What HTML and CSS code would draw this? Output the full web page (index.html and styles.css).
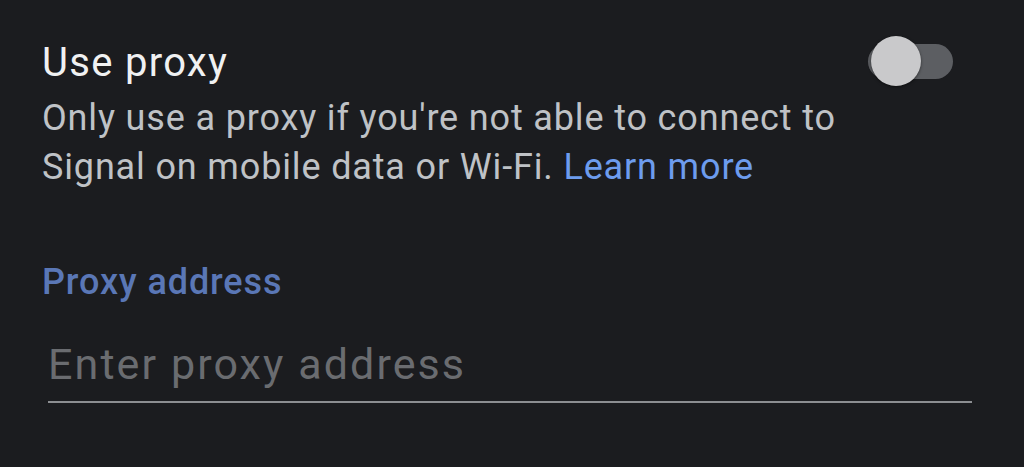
FILE: index.html
```html
<!DOCTYPE html>
<html lang="en">
<head>
<meta charset="utf-8">
<title>Proxy settings</title>
<link rel="stylesheet" href="styles.css">
</head>
<body>
<div class="screen">
  <div class="pref-row">
    <div class="pref-text">
      <div class="pref-title">Use proxy</div>
      <div class="pref-summary">Only use a proxy if you're not able to connect to Signal on mobile data or Wi-Fi. <span class="link">Learn more</span></div>
    </div>
    <div class="switch">
      <div class="switch-track"></div>
      <div class="switch-thumb"></div>
    </div>
  </div>
  <div class="field-label">Proxy address</div>
  <div class="field">
    <div class="field-placeholder">Enter proxy address</div>
  </div>
</div>
</body>
</html>
```

FILE: styles.css
```css
html, body {
  margin: 0;
  padding: 0;
  background: #1b1c1f;
}
body {
  width: 1024px;
  height: 467px;
  overflow: hidden;
  font-family: Roboto, "Liberation Sans", sans-serif;
}
.screen {
  padding-left: 42px;
  padding-top: 36px;
}
.pref-row {
  display: flex;
  align-items: flex-start;
}
.pref-text {
  flex: 1;
  padding-top: 5px;
}
.pref-title {
  font-size: 40px;
  line-height: 44px;
  letter-spacing: 1.3px;
  color: #f0f1f2;
}
.pref-summary {
  margin-top: 9px;
  font-size: 36px;
  line-height: 49px;
  letter-spacing: 0.85px;
  color: #bfc2c6;
  width: 815px;
}
.link {
  color: #6d9cee;
}
.switch {
  position: relative;
  width: 85px;
  height: 50px;
  margin-right: 71px;
  flex: none;
}
.switch-track {
  margin-top: 7.5px;
  height: 35px;
  border-radius: 17.5px;
  background: #5c5e62;
}
.switch-thumb {
  position: absolute;
  left: 3px;
  top: 0;
  width: 50px;
  height: 50px;
  border-radius: 50%;
  background: #c9c9cb;
  box-shadow: 0 1px 3px rgba(0,0,0,0.5);
}
.field-label {
  margin-top: 70px;
  font-size: 36px;
  line-height: 40px;
  font-weight: 500;
  letter-spacing: 0.9px;
  color: #5a77b6;
}
.field {
  margin-top: 37px;
  margin-left: 6px;
  width: 924px;
  padding-bottom: 12px;
  border-bottom: 2px solid #8c8e91;
}
.field-placeholder {
  font-size: 43px;
  line-height: 50px;
  letter-spacing: 2.1px;
  color: #6a6c70;
}
```
